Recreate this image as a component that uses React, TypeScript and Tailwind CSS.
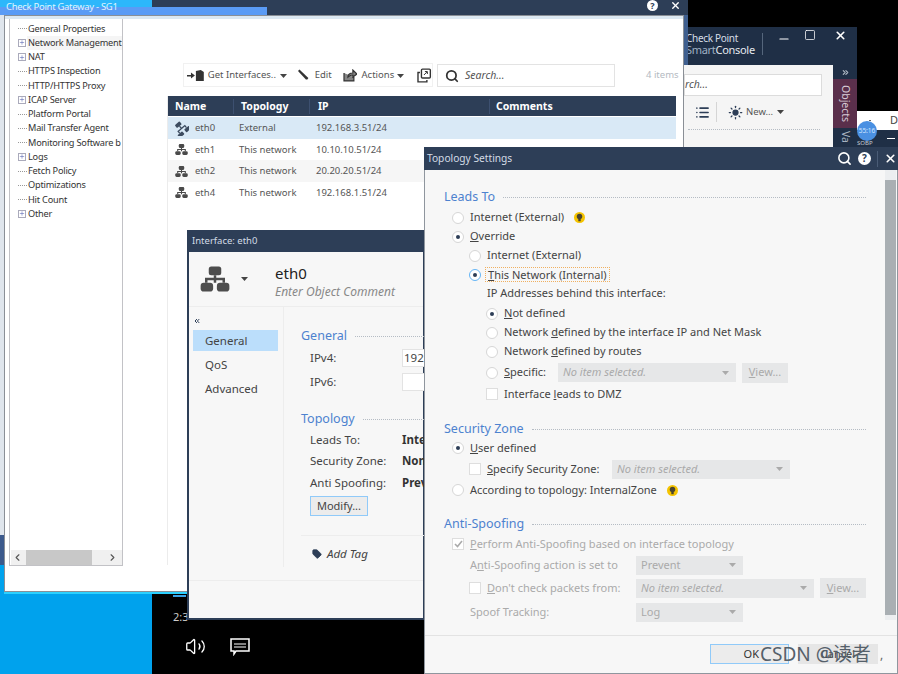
import React from 'react';
import { Search, X, List, Sun, Volume2, ChevronLeft, ChevronRight, Plus, Minus, Square, ChevronsLeft, ChevronsRight, Tag } from 'lucide-react';

const NetIcon = ({ size = 14, color = '#4a4a4a' }: { size?: number; color?: string }) => (
  <svg width={size} height={size} viewBox="0 0 24 24">
    <rect x="7" y="2" width="10" height="7" rx="2" fill={color} />
    <path d="M12 9v6M5 15v-3h14v3" stroke={color} strokeWidth="2" fill="none" />
    <rect x="0.5" y="15" width="10" height="7" rx="2.5" fill={color} />
    <rect x="13.5" y="15" width="10" height="7" rx="2.5" fill={color} />
  </svg>
);

const ExtIcon = () => (
  <svg width={15} height={15} viewBox="0 0 24 24">
    <g transform="rotate(-40 12 12)" fill="#3d4c60">
      <rect x="7" y="1" width="10" height="6" rx="1.5" />
      <rect x="0" y="16" width="10" height="6" rx="1.5" />
      <rect x="14" y="16" width="10" height="6" rx="1.5" />
      <path d="M11 7h2v4h7v5h-2v-3H6v3H4v-5h7z" />
    </g>
  </svg>
);

const Caret = ({ color = '#444' }: { color?: string }) => (
  <svg width="7" height="4" viewBox="0 0 7 4"><path d="M0 0h7L3.5 4z" fill={color} /></svg>
);

const Bulb = () => (
  <svg width="11" height="11" viewBox="0 0 12 12">
    <circle cx="6" cy="6" r="6" fill="#f5c400" />
    <circle cx="6" cy="4.8" r="3" fill="#4a4530" />
    <rect x="4.7" y="7.5" width="2.6" height="2.6" fill="#4a4530" />
  </svg>
);

const Help = ({ size = 'h-[13px] w-[13px] text-[10px]' }: { size?: string }) => (
  <span className={`flex items-center justify-center rounded-full bg-white font-bold text-[#2d3e57] ${size}`}>?</span>
);

const Radio = ({ on, blue }: { on?: boolean; blue?: boolean }) => (
  <span className={`flex h-[12px] w-[12px] shrink-0 items-center justify-center rounded-full border bg-white ${blue ? 'border-[#64b5f6]' : 'border-[#d6d6d6]'}`}>
    {on && <span className="h-[4px] w-[4px] rounded-full bg-[#2d3e57]" />}
  </span>
);

const Check = ({ on }: { on?: boolean }) => (
  <span className="flex h-[12px] w-[12px] shrink-0 items-center justify-center border border-[#dedede] bg-white">
    {on && (
      <svg width="9" height="8" viewBox="0 0 9 8"><path d="M1 4l2.5 2.5L8 1" stroke="#aaa" strokeWidth="1.6" fill="none" /></svg>
    )}
  </span>
);

const Select = ({ text, cls, italic }: { text: string; cls: string; italic?: boolean }) => (
  <span className={`flex h-[19px] shrink-0 items-center justify-between bg-[#e6e7e8] pl-[5px] pr-[7px] text-[#aaa] ${italic ? 'italic' : ''} ${cls}`}>
    {text}
    <Caret color="#aaa" />
  </span>
);

const ViewBtn = () => (
  <span className="flex h-[20px] w-[46px] shrink-0 items-center justify-center bg-[#e6e7e8] text-[#aaa]"><span><u>V</u>iew...</span></span>
);

const Section = ({ title }: { title: string }) => (
  <div className="flex h-[19px] items-center gap-[8px] pt-[2px] text-[12.5px] text-[#4d82cf]">
    <span>{title}</span>
    <span className="flex-1 border-t border-dotted border-[#b5bcc4]" />
  </div>
);

const TREE: [string, boolean][] = [
  ['General Properties', false], ['Network Management', true], ['NAT', true], ['HTTPS Inspection', false],
  ['HTTP/HTTPS Proxy', false], ['ICAP Server', true], ['Platform Portal', false], ['Mail Transfer Agent', false],
  ['Monitoring Software b', false], ['Logs', true], ['Fetch Policy', false], ['Optimizations', false],
  ['Hit Count', false], ['Other', true],
];

const ROWS = [
  { n: 'eth0', t: 'External', ip: '192.168.3.51/24', bg: 'bg-[#d9e9f6]' },
  { n: 'eth1', t: 'This network', ip: '10.10.10.51/24', bg: 'bg-white' },
  { n: 'eth2', t: 'This network', ip: '20.20.20.51/24', bg: 'bg-[#f6f6f6]' },
  { n: 'eth4', t: 'This network', ip: '192.168.1.51/24', bg: 'bg-white' },
];

function GatewayWindow() {
  return (
    <>
      <div className="absolute left-0 top-0 h-[8px] w-[152px] bg-[#2cb7fb]" />
      <div className="absolute left-[152px] top-0 flex h-[15px] w-[536px] items-start justify-end gap-[12px] bg-[#2d3e57] pr-[7px]">
        <Help size="h-[11px] w-[11px] text-[9px]" />
        <X size={11} strokeWidth={3} className="text-white" />
      </div>
      <div className="absolute left-0 top-[7px] h-[8px] w-[267px] bg-[#5a9bf5]" />
      <div className="absolute left-[6px] top-0 text-[9.5px] leading-[13px] tracking-[-0.3px] text-[#dff4ff]">Check Point Gateway - SG1</div>
      <div className="absolute left-0 top-[15px] h-[520px] w-[4px] bg-[#dfe5ec]" />
      <div className="absolute left-0 top-[535px] h-[30px] w-[4px] bg-[#3c5a8c]" />
      <div className="absolute left-[683px] top-[15px] h-[50px] w-[5px] bg-[#3f5f8f]" />

      <div className="absolute left-[4px] top-[15px] flex h-[577px] w-[680px] border border-[#8a8f96] bg-white shadow-[0_2px_0_#2bd0ff]">
        <div className="absolute left-0 top-0 h-[3px] w-full bg-[#dce8f2]" />
        {/* tree */}
        <div className="ml-[4px] mt-[3px] flex h-[547px] w-[114px] flex-col justify-between border-x border-b border-[#c2c2c6] bg-white">
          <div className="flex flex-col pt-[2.500px]">
            {TREE.map(([label, plus], i) => (
              <div key={label} className="flex h-[14.25px] items-center text-[9.2px] tracking-[-0.2px] text-[#333]">
                <span className="flex w-[17px] items-center justify-end">
                  {plus ? (
                    <span className="mr-[1px] flex h-[8px] w-[8px] items-center justify-center border border-[#aab] text-[#45a]"><Plus size={7} strokeWidth={2} /></span>
                  ) : (
                    <span className="w-[9px] border-t border-dotted border-[#999]" />
                  )}
                </span>
                <span className={`flex-1 overflow-hidden whitespace-nowrap pl-[1px] ${i === 1 ? 'bg-[#f5f5f5]' : ''}`}>{label}</span>
              </div>
            ))}
          </div>
          <div className="ml-[1px] flex h-[15px] items-center justify-between bg-[#f0f0f0] px-[1px] text-[#555]">
            <ChevronLeft size={11} strokeWidth={2.5} />
            <span className="ml-[3px] h-[15px] w-[66px] bg-[#c8c8c8]" />
            <span className="flex-1" />
            <ChevronRight size={11} strokeWidth={2.5} className="mr-[3px]" />
          </div>
        </div>
        {/* right pane */}
        <div className="flex flex-col pt-[47px]">
          <div className="ml-[60px] flex h-[24px] items-center">
            <div className="flex h-[24px] w-[250px] items-center whitespace-nowrap border border-[#f1f1f1] bg-white pl-[3px] pt-[1px] text-[9.5px] text-[#555]">
              <svg width="18" height="13" viewBox="0 0 18 13" className="mr-[3px]">
                <path d="M0 6h4V3.500l4 3-4 3V7.500H0z" fill="#333" />
                <path d="M9 2l5-1 3 2v9H9z" fill="#333" />
              </svg>
              <span className="w-[65px]">Get Interfaces..</span>
              <span className="ml-[7px]"><Caret /></span>
              <svg width="14" height="14" viewBox="0 0 14 14" className="ml-[9px]">
                <path d="M2 2l1.500-1.500 9 8.500-1 1.500-1.500 0z" fill="#333" />
              </svg>
              <span className="ml-[5px]">Edit</span>
              <svg width="14" height="13" viewBox="0 0 14 13" className="ml-[11px]">
                <path d="M1 4v8h10V8M5 8c0-3 2-4 5-4V1l4 4-4 3V6C7 6 6 7 5 8z" stroke="#333" strokeWidth="1.200" fill="#333" fillOpacity="0.6" />
              </svg>
              <span className="ml-[5px]">Actions</span>
              <span className="ml-[3px]"><Caret /></span>
              <svg width="15" height="15" viewBox="0 0 15 15" className="ml-[13px]">
                <rect x="4.500" y="1" width="9" height="9" rx="1" fill="none" stroke="#333" strokeWidth="1.400" />
                <path d="M3 4.500H1v9.500h9v-2" fill="none" stroke="#333" strokeWidth="1.400" />
                <path d="M7 7l3-3M8 3.500h2.500V6" fill="none" stroke="#333" />
              </svg>
            </div>
            <div className="ml-[4px] flex h-[23px] w-[178px] items-center border border-[#e3e3e3] pl-[7px] pt-[1px] text-[10.5px] italic text-[#555]">
              <Search size={14} strokeWidth={3} className="mr-[6px] text-[#333]" />
              Search...
            </div>
            <span className="ml-[31px] whitespace-nowrap pt-[1px] text-[9.5px] text-[#b4bac2]">4 items</span>
          </div>
          <div className="ml-[44px] mt-[9px] flex h-[469px] flex-col border-l border-[#ececec]">
            <div className="grid h-[20px] w-[508px] grid-cols-[65px_76px_180px_187px] items-center bg-[#2d3e57] pt-[1px] text-[10.5px] font-bold text-white">
              <span className="pl-[7px]">Name</span>
              <span className="border-l border-[#3d5070] pl-[7px]">Topology</span>
              <span className="border-l border-[#3d5070] pl-[8px]">IP</span>
              <span className="border-l border-[#3d5070] pl-[6px]">Comments</span>
            </div>
            {ROWS.map((r, i) => (
              <div key={r.n} className={`grid h-[21.500px] w-[508px] grid-cols-[65px_76px_180px_187px] items-center pt-[1px] text-[9.5px] text-[#555] ${r.bg} ${i === 0 ? 'mt-[1px]' : ''}`}>
                <span className="flex items-center gap-[6px] pl-[6px]">
                  <span className="flex w-[15px] justify-center">{i === 0 ? <ExtIcon /> : <NetIcon size={13} />}</span>
                  {r.n}
                </span>
                <span className="pl-[6px]">{r.t}</span>
                <span className="pl-[7px]">{r.ip}</span>
                <span />
              </div>
            ))}
          </div>
        </div>
      </div>
    </>
  );
}

function SmartConsole() {
  return (
    <>
      <div className="absolute left-[684px] top-[27px] flex h-[38px] w-[173px] items-start bg-[#1f2f46]">
        <div className="ml-[2px] mt-[6px] flex w-[76px] flex-col text-[10px] leading-[11px] text-[#d5dde6]">
          <span className="tracking-[-0.3px]">Check Point</span>
          <span className="text-[11px] tracking-[-0.3px] text-[#9fb1c4]">Smart<span className="text-[#e4e9ee]">Console</span></span>
        </div>
        <span className="mt-[6px] h-[22px] w-px bg-[#55667c]" />
        <Minus size={14} strokeWidth={2} className="ml-[14px] mt-[5px] text-white" />
        <Square size={12} strokeWidth={1.5} className="ml-[13px] mt-[2px] text-white" />
        <X size={13} strokeWidth={3} className="ml-[18px] mt-[2px] text-white" />
      </div>
      <div className="absolute left-[684px] top-[65px] flex h-[82px] w-[149px] flex-col bg-[#f5f5f5]">
        <div className="mt-[9px] flex h-[22px] w-[138px] items-center border border-[#dcdcdc] bg-white text-[10.5px] italic text-[#555]">rch...</div>
        <div className="mt-[6px] flex h-[20px] items-center text-[9.5px] text-[#555]">
          <List size={15} strokeWidth={2.500} className="ml-[11px] text-[#2d3e57]" />
          <span className="ml-[6px] h-[20px] w-px bg-[#d5d5d5]" />
          <Sun size={15} strokeWidth={2} fill="#2d3e57" className="ml-[11px] text-[#2d3e57]" />
          <span className="ml-[3px]">New...</span>
          <span className="ml-[4px]"><Caret /></span>
        </div>
        <div className="ml-[4px] mt-[7px] w-[132px] border-t border-dotted border-[#b5bcc4]" />
      </div>
      <div className="absolute left-[833px] top-[65px] flex h-[82px] w-[24px] flex-col items-center bg-[#1f2f46]">
        <ChevronsRight size={9} strokeWidth={3} className="mt-[3px] text-[#aeb8c4]" />
        <div className="mt-[2px] flex h-[49px] w-[24px] items-center justify-center bg-[#5a2f4b] text-[10.5px] text-[#d8ccd6] [writing-mode:vertical-rl]">Objects</div>
        <div className="mt-[3px] text-[10.5px] text-[#aeb8c4] [writing-mode:vertical-rl]">Va</div>
      </div>
      <div className="absolute left-[857px] top-[111px] flex h-[19px] w-[41px] items-center bg-white pl-[12px] text-[11px] text-[#444]">
        <span className="w-[7px] border-t border-[#666]" />
        <span className="ml-[19px]">D</span>
      </div>
      <div className="absolute left-[857px] top-[130px] flex h-[17px] w-[41px] items-center bg-[#1f2f46] pl-[30px]">
        <span className="w-[8px] border-t border-white" />
      </div>
      <div className="absolute left-[857px] top-[121px] flex h-[20px] w-[20px] items-center justify-center rounded-full bg-[#4a90e2] text-[6.500px] text-[#cfe4ff]">55:16</div>
      <div className="absolute left-[857px] top-[140px] text-[6px] leading-[7px] text-[#c5ccd4]">SOBP</div>
    </>
  );
}

function InterfaceWindow() {
  return (
    <div className="absolute left-[187px] top-[230px] flex h-[390px] w-[238px] flex-col border-2 border-[#2d3e57] bg-[#f7f7f7] text-[11.500px] text-[#444]">
      <div className="-mx-[2px] -mt-[2px] flex h-[22px] shrink-0 items-center bg-[#2d3e57] pl-[5px] text-[9.5px] text-[#d4dce6]">Interface: eth0</div>
      <div className="flex h-[55px] shrink-0 items-center border-b border-[#ededed]">
        <span className="ml-[11px]"><NetIcon size={30} color="#4d4d4d" /></span>
        <span className="ml-[11px]"><Caret /></span>
        <div className="ml-[27px] flex flex-col pt-[5px]">
          <span className="text-[15px] leading-[20px] text-[#222]">eth0</span>
          <span className="text-[12px] italic leading-[17px] text-[#888]">Enter Object Comment</span>
        </div>
      </div>
      <div className="flex flex-1">
        <div className="flex w-[94px] shrink-0 flex-col">
          <ChevronsLeft size={8} strokeWidth={3} className="ml-[4px] mt-[10px] text-[#2d3e57]" />
          <div className="ml-[4px] mt-[5px] flex h-[21px] w-[85px] items-center bg-[#bbdefb] pl-[12px]">General</div>
          <div className="ml-[16px] mt-[3px] flex h-[21px] items-center">QoS</div>
          <div className="ml-[16px] mt-[3px] flex h-[21px] items-center">Advanced</div>
        </div>
        <div className="flex h-[260px] flex-1 flex-col border-l border-[#ededed] pl-[17px]">
          <div className="mt-[20px] flex h-[19px] items-center gap-[8px] text-[12.5px] text-[#4d82cf]">
            General <span className="flex-1 border-t border-dotted border-[#b5bcc4]" />
          </div>
          <div className="ml-[9px] mt-[3px] flex h-[17px] items-center">
            <span className="w-[92px]">IPv4:</span>
            <span className="h-[18px] flex-1 border border-[#e3e3e3] bg-white pl-[1px] leading-[16px]">192.168</span>
          </div>
          <div className="ml-[9px] mt-[7px] flex h-[17px] items-center">
            <span className="w-[92px]">IPv6:</span>
            <span className="h-[18px] flex-1 border border-[#e3e3e3] bg-white" />
          </div>
          <div className="mt-[20px] flex h-[19px] items-center gap-[8px] text-[12.5px] text-[#4d82cf]">
            Topology <span className="flex-1 border-t border-dotted border-[#b5bcc4]" />
          </div>
          <div className="ml-[9px] flex h-[21px] items-center"><span className="w-[92px]">Leads To:</span><b className="text-[#333]">Internet</b></div>
          <div className="ml-[9px] flex h-[22px] items-center"><span className="w-[92px]">Security Zone:</span><b className="text-[#333]">None</b></div>
          <div className="ml-[9px] flex h-[21px] items-center"><span className="w-[92px]">Anti Spoofing:</span><b className="text-[#333]">Prevent</b></div>
          <span className="ml-[9px] mt-[3px] flex h-[20px] w-[58px] items-center justify-center border border-[#90caf9] bg-[#ececec] text-[11px]">Modify...</span>
          <div className="mt-[19px] border-t border-[#ededed]" />
          <div className="ml-[11px] mt-[9px] flex h-[18px] items-center gap-[4px] italic">
            <Tag size={10} fill="#2d3e57" className="text-[#2d3e57]" />
            <span className="ml-[1px]">Add Tag</span>
          </div>
        </div>
      </div>
      <div className="h-[38px] shrink-0 border-t border-[#ededed]" />
    </div>
  );
}

function TopologyWindow() {
  const row = 'flex h-[19px] items-center whitespace-nowrap';
  return (
    <div className="absolute left-[424px] top-[147px] flex h-[527px] w-[474px] flex-col border-x border-b border-[#8f969e] bg-[#f7f7f7] text-[11px] text-[#444]">
      <div className="-mx-px flex h-[23px] shrink-0 items-center bg-[#2d3e57] pl-[3px] text-[10.200px] text-[#d4dce6]">
        Topology Settings
        <span className="flex-1" />
        <Search size={15} strokeWidth={2.500} className="text-white" />
        <span className="ml-[6px]"><Help size="h-[13px] w-[13px] text-[10px]" /></span>
        <span className="ml-[6px] h-[16px] w-px bg-[#4a5c76]" />
        <X size={13} strokeWidth={3} className="ml-[6px] mr-[1px] text-white" />
      </div>
      <div className="flex flex-1">
        <div className="flex w-[460px] flex-col pl-[19px] pr-[19px] pt-[17px]">
          <Section title="Leads To" />
          <div className={`${row} ml-[8px] mt-[2px] gap-[6px]`}>
            <Radio /><span>Internet (External)</span><span className="ml-[4px]"><Bulb /></span>
          </div>
          <div className={`${row} ml-[8px] gap-[6px]`}><Radio on /><span><u>O</u>verride</span></div>
          <div className={`${row} ml-[25px] gap-[6px]`}><Radio /><span>Internet (External)</span></div>
          <div className={`${row} ml-[25px] gap-[4px]`}>
            <Radio on blue />
            <span className="border border-dotted border-[#f0b060] px-[2px] leading-[13px]"><u>T</u>his Network (Internal)</span>
          </div>
          <div className={`${row} ml-[43px]`}>IP Addresses behind this interface:</div>
          <div className={`${row} ml-[42px] mt-[1px] gap-[6px]`}><Radio on /><span><u>N</u>ot defined</span></div>
          <div className={`${row} ml-[42px] gap-[6px]`}><Radio /><span>Network <u>d</u>efined by the interface IP and Net Mask</span></div>
          <div className={`${row} ml-[42px] gap-[6px]`}><Radio /><span>Network <u>d</u>efined by routes</span></div>
          <div className={`${row} ml-[42px] mt-[2px] gap-[6px]`}>
            <Radio /><span className="w-[48px]"><u>S</u>pecific:</span>
            <Select text="No item selected." cls="w-[178px]" italic />
            <ViewBtn />
          </div>
          <div className={`${row} ml-[42px] mt-[2.500px] gap-[6px]`}><Check /><span>Interface <u>l</u>eads to DMZ</span></div>

          <div className="mt-[15px]"><Section title="Security Zone" /></div>
          <div className={`${row} ml-[8px] mt-[1px] gap-[6px]`}><Radio on /><span><u>U</u>ser defined</span></div>
          <div className={`${row} ml-[25px] mt-[2px] gap-[6px]`}>
            <Check /><span className="w-[119px]"><u>S</u>pecify Security Zone:</span>
            <Select text="No item selected." cls="w-[178px]" italic />
          </div>
          <div className={`${row} ml-[8px] mt-[2px] gap-[6px]`}>
            <Radio /><span>According to topology: InternalZone</span><span className="ml-[4px]"><Bulb /></span>
          </div>

          <div className="mt-[14px]"><Section title="Anti-Spoofing" /></div>
          <div className={`${row} ml-[8px] mt-[2px] gap-[6px] text-[#aaa]`}><Check on /><span><u>P</u>erform Anti-Spoofing based on interface topology</span></div>
          <div className={`${row} ml-[26px] mt-[2px] text-[#aaa]`}>
            <span className="w-[166px]">A<u>n</u>ti-Spoofing action is set to</span>
            <Select text="Prevent" cls="w-[107px]" />
          </div>
          <div className={`${row} ml-[25px] mt-[4px] gap-[6px] text-[#aaa]`}>
            <Check /><span className="w-[143px]"><u>D</u>on't check packets from:</span>
            <Select text="No item selected." cls="w-[178px]" italic />
            <ViewBtn />
          </div>
          <div className={`${row} ml-[26px] mt-[5px] text-[#aaa]`}>
            <span className="w-[166px]">Spoof Tracking:</span>
            <Select text="Log" cls="w-[107px]" />
          </div>
        </div>
        <div className="ml-auto mr-px flex h-[450px] w-[12px] flex-col bg-[#eceef0] pt-[10px]">
          <div className="h-[435px] bg-[#a9afb3]" />
        </div>
      </div>
      <div className="flex h-[38px] shrink-0 items-start justify-end border-t border-[#e3e3e3] pr-[19px] pt-[8px]">
        <span className="flex h-[20px] w-[79px] items-center justify-end border border-[#90caf9] bg-[#ececec] pr-[29px] text-[#333]">OK</span>
        <span className="ml-[9px] flex h-[20px] w-[80px] items-center justify-center bg-[#e6e6e6] text-[#444]">Cancel</span>
      </div>
      <div className="absolute left-[335px] top-[493px] font-['Noto_Sans','Noto_Sans_CJK_SC',sans-serif] text-[19px] text-[#55606a]">CSDN @读者</div>
      <div className="absolute left-[455px] top-[499px] text-[12px] text-[#666]">,</div>
    </div>
  );
}

export default function App() {
  return (
    <div className="relative h-[674px] w-[898px] overflow-hidden bg-black font-['Noto_Sans',sans-serif]">
      <div className="absolute left-0 top-0 h-[674px] w-[152px] bg-[#00a2ed]" />
      <SmartConsole />
      <GatewayWindow />
      <div className="absolute left-[173px] top-[595px] h-[2px] w-[13px] bg-[#3aa3e8]" />
      <div className="absolute left-[173px] top-[609px] text-[11px] text-[#ccc]">2:3</div>
      <Volume2 size={21} strokeWidth={1.500} className="absolute left-[185px] top-[636px] text-white" />
      <svg width="20" height="18" viewBox="0 0 20 18" className="absolute left-[230px] top-[638px]">
        <path d="M1 1h18v12H6l-2 3v-3H1z" fill="none" stroke="#fff" strokeWidth="1.500" />
        <path d="M4 6h12M4 9h12" stroke="#fff" />
      </svg>
      <InterfaceWindow />
      <TopologyWindow />
    </div>
  );
}
